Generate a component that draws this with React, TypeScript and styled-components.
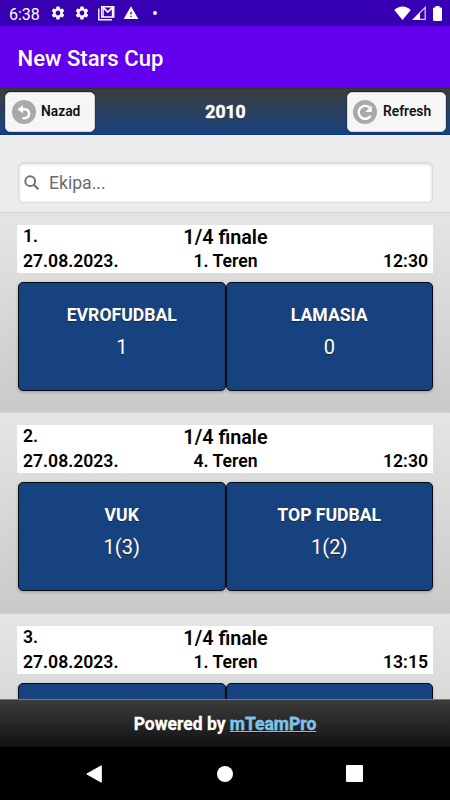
import React from "react";
import styled, { createGlobalStyle } from "styled-components";
import { MdSettings, MdWarning } from "react-icons/md";

const GlobalStyle = createGlobalStyle`
  * { box-sizing: border-box; }
  body { margin: 0; background: #000; font-family: Roboto, sans-serif; overflow: hidden; }
`;

const Screen = styled.div`
  width: 450px;
  height: 800px;
  display: flex;
  flex-direction: column;
  overflow: hidden;
  white-space: nowrap;
`;

const StatusBar = styled.div`
  flex: none;
  height: 26px;
  background: #3700b3;
  color: #fff;
  display: flex;
  align-items: center;
  justify-content: space-between;
  padding: 0 8px 0 9px;
`;

const StatusGroup = styled.div<{ $gap: number }>`
  display: flex;
  align-items: center;
  gap: ${(p) => p.$gap}px;
  svg { display: block; }
`;

const Clock = styled.span`
  font-size: 16px;
  line-height: 23px;
  width: 33px;
  padding-top: 3px;
`;

const Dot = styled.span`
  width: 4px;
  height: 4px;
  border-radius: 50%;
  background: #fff;
  margin-left: 6px;
`;

const AppBar = styled.header`
  flex: none;
  height: 62px;
  background: #6200ee;
  color: #fff;
  font-size: 22.1px;
  font-weight: 500;
  line-height: 64px;
  padding-left: 17.5px;
`;

const Toolbar = styled.div`
  flex: none;
  height: 47px;
  display: grid;
  grid-template-columns: 1fr auto 1fr;
  align-items: start;
  padding: 4px 4px 0 5px;
  background: linear-gradient(#3c3c3c, #174280);
  border-top: 1px solid #33342b;
  border-bottom: 1px solid #06348a;
`;

const ToolButton = styled.button<{ $width: number; $end?: boolean }>`
  width: ${(p) => p.$width}px;
  justify-self: ${(p) => (p.$end ? "end" : "start")};
  height: 40px;
  margin-top: -1px;
  display: flex;
  align-items: center;
  gap: ${(p) => (p.$end ? 6 : 5)}px;
  padding: 0 0 0 ${(p) => (p.$end ? 5 : 6)}px;
  border: 1px solid #d4d6da;
  border-radius: 5px;
  background: #f6f6f6;
  box-shadow: 0 -1px 1px rgba(0, 0, 0, 0.5), 0 1px 2px rgba(0, 0, 0, 0.2);
  color: #111;
  font: 600 13.8px Roboto, sans-serif;
  svg { flex: none; }
  span { margin-bottom: 2px; }
`;

const Heading = styled.h1`
  margin: 0;
  color: #fff;
  font-size: 17.6px;
  font-weight: 700;
  line-height: 39px;
  text-shadow: 0 1px 0 #111;
  -webkit-text-stroke: 0.5px #fff;
`;

const SearchArea = styled.div`
  flex: none;
  height: 77px;
  background: #ececec;
  padding: 27px 17px 0 18px;
  box-shadow: inset 0 1px 1px #f5f5f5;
`;

const SearchBox = styled.label`
  height: 41px;
  display: flex;
  align-items: center;
  padding-left: 5px;
  gap: 9px;
  border: 1px solid #d9d9d9;
  border-radius: 5px;
  background: #fff;
  box-shadow: inset 0 1px 3px rgba(0, 0, 0, 0.2);
`;

const SearchInput = styled.input`
  border: 0;
  outline: 0;
  background: transparent;
  padding: 0;
  width: 350px;
  font: 400 17.6px Roboto, sans-serif;
  &::placeholder { color: #6c6c6c; opacity: 1; }
`;

const MatchList = styled.main`
  flex: 1 1 0;
  min-height: 0;
  overflow: hidden;
  background: #c9c9c9;
`;

const MatchItem = styled.section`
  height: 200.4px;
  padding: 12px 17px 0;
  border-top: 1px solid #d3d3d3;
  background: linear-gradient(#e5e5e5, #c9c9c9);
`;

const MatchInfo = styled.div`
  height: 48px;
  display: grid;
  grid-template-columns: 1fr auto 1fr;
  grid-template-rows: 25px 22px;
  padding: 0 5px 0 6px;
  background: #fff;
  color: #000;
  font-size: 17.6px;
  font-weight: 600;
  line-height: 22px;
  text-align: center;
`;

const Start = styled.span`
  text-align: left;
`;

const End = styled.span`
  text-align: right;
`;

const Stage = styled.span`
  font-size: 19.8px;
  line-height: 25px;
`;

const Teams = styled.div`
  display: flex;
  margin-top: 9px;
  padding-left: 1px;
`;

const Team = styled.div`
  flex: 1 1 0;
  height: 109px;
  padding-top: 20px;
  border: 1px solid #080c14;
  border-radius: 5px;
  background: #174280;
  box-shadow: 0 1px 3px rgba(0, 0, 0, 0.25);
  color: #fff;
  text-align: center;
  text-shadow: 0 1px 0 #222;
`;

const TeamName = styled.div`
  font-size: 17.6px;
  font-weight: 700;
  line-height: 25px;
`;

const Score = styled.div`
  font-size: 20px;
  line-height: 26px;
  margin-top: 6px;
`;

const Footer = styled.footer`
  flex: none;
  height: 48px;
  border-top: 1px solid #777;
  background: linear-gradient(#3c3c3c, #111);
  color: #fff;
  text-align: center;
  font-size: 17.5px;
  font-weight: 700;
  line-height: 48px;
  text-shadow: 0 1px 0 #111;
  -webkit-text-stroke: 0.3px currentColor;
`;

const FooterLink = styled.a`
  color: #7cc4e7;
  text-decoration: underline;
`;

const NavBar = styled.nav`
  flex: none;
  height: 53px;
  background: #000;
  display: grid;
  grid-template-columns: 1fr 18px 1fr;
  align-items: center;
  justify-items: center;
  svg { display: block; }
`;

const NavSlot = styled.div<{ $side: "left" | "right" }>`
  justify-self: ${(p) => (p.$side === "left" ? "end" : "start")};
  margin: ${(p) => (p.$side === "left" ? "0 114px 0 0" : "0 0 0 112px")};
`;

const GmailIcon = () => (
  <svg width="17" height="15" viewBox="0 0 17 15" fill="none" stroke="#fff">
    <path d="M.8 2.5v11.2H14" strokeWidth="1.4" />
    <path d="M3.7.8h12.1v10.2H3.7z" strokeWidth="1.4" />
    <path d="M5.2 1.6 9.8 6l4.6-4.4" strokeWidth="1.7" />
    <path d="M5.2 1v10M14.4 1v10" strokeWidth="1.2" />
  </svg>
);

const WifiIcon = () => (
  <svg width="17" height="14" viewBox="0 0 17 14" fill="#fff">
    <path d="M8.5 14 .3 4C4.8-.7 12.2-.7 16.7 4z" />
  </svg>
);

const SignalIcon = () => (
  <svg width="14" height="14" viewBox="0 0 14 14">
    <path d="M1.4 13.3 13.2 1.4v11.9z" fill="none" stroke="#dcd8ff" strokeWidth="1.2" />
    <path d="M1 13.5 8 6.4v7.1z" fill="#fff" />
  </svg>
);

const BatteryIcon = () => (
  <svg width="9" height="15" viewBox="0 0 9 15" fill="#fff">
    <path d="M2.5 0h4v1.5h1.3q1.2 0 1.2 1.2v11q0 1.2-1.2 1.2H1.2Q0 14.9 0 13.7v-11q0-1.2 1.2-1.2h1.3z" />
  </svg>
);

const BackIcon = () => (
  <svg width="24" height="24" viewBox="0 0 24 24">
    <circle cx="12" cy="12" r="12" fill="#a9a9a9" />
    <path d="M11 5v8.6L5.4 9.3z" fill="#fff" />
    <path d="M9.5 9.3h3.2c5.8 0 6 8.2-.4 9h-1.8" fill="none" stroke="#fff" strokeWidth="2.5" />
  </svg>
);

const RefreshIcon = () => (
  <svg width="24" height="24" viewBox="0 0 24 24">
    <circle cx="12" cy="12" r="12" fill="#a9a9a9" />
    <path d="M16.6 7.6A6.5 6.5 0 1 0 17.6 15.9" fill="none" stroke="#fff" strokeWidth="2.4" />
    <path d="M18.8 5.4v6.5h-6.5z" fill="#fff" />
  </svg>
);

const SearchIcon = () => (
  <svg width="16" height="16" viewBox="0 0 16 16" fill="none" stroke="#737373">
    <circle cx="6.2" cy="6.2" r="4.9" strokeWidth="2" />
    <path d="m9.8 9.8 4.6 4.5" strokeWidth="2.2" />
  </svg>
);

interface Match {
  id: number;
  stage: string;
  date: string;
  field: string;
  time: string;
  teams: { name: string; score: string }[];
}

const matches: Match[] = [
  { id: 1, stage: "1/4 finale", date: "27.08.2023.", field: "1. Teren", time: "12:30", teams: [{ name: "EVROFUDBAL", score: "1" }, { name: "LAMASIA", score: "0" }] },
  { id: 2, stage: "1/4 finale", date: "27.08.2023.", field: "4. Teren", time: "12:30", teams: [{ name: "VUK", score: "1(3)" }, { name: "TOP FUDBAL", score: "1(2)" }] },
  { id: 3, stage: "1/4 finale", date: "27.08.2023.", field: "1. Teren", time: "13:15", teams: [{ name: "", score: "" }, { name: "", score: "" }] },
];

export default function App() {
  return (
    <>
      <GlobalStyle />
      <Screen>
        <StatusBar>
          <StatusGroup $gap={8}>
            <Clock>6:38</Clock>
            <MdSettings size={16} />
            <MdSettings size={16} />
            <GmailIcon />
            <MdWarning size={16} />
            <Dot />
          </StatusGroup>
          <StatusGroup $gap={7}>
            <StatusGroup $gap={1}>
              <WifiIcon />
              <SignalIcon />
            </StatusGroup>
            <BatteryIcon />
          </StatusGroup>
        </StatusBar>
        <AppBar>New Stars Cup</AppBar>
        <Toolbar>
          <ToolButton $width={90}><BackIcon /><span>Nazad</span></ToolButton>
          <Heading>2010</Heading>
          <ToolButton $width={99} $end><RefreshIcon /><span>Refresh</span></ToolButton>
        </Toolbar>
        <SearchArea>
          <SearchBox>
            <SearchIcon />
            <SearchInput placeholder="Ekipa..." />
          </SearchBox>
        </SearchArea>
        <MatchList>
          {matches.map((m) => (
            <MatchItem key={m.id}>
              <MatchInfo>
                <Start>{m.id}.</Start>
                <Stage>{m.stage}</Stage>
                <End />
                <Start>{m.date}</Start>
                <span>{m.field}</span>
                <End>{m.time}</End>
              </MatchInfo>
              <Teams>
                {m.teams.map((t, i) => (
                  <Team key={i}>
                    <TeamName>{t.name}</TeamName>
                    <Score>{t.score}</Score>
                  </Team>
                ))}
              </Teams>
            </MatchItem>
          ))}
        </MatchList>
        <Footer>Powered by <FooterLink>mTeamPro</FooterLink></Footer>
        <NavBar>
          <NavSlot $side="left">
            <svg width="16" height="18" viewBox="0 0 16 18"><path d="M15.3.8v16.4L.8 9z" fill="#fff" stroke="#fff" strokeLinejoin="round" /></svg>
          </NavSlot>
          <svg width="16" height="16" viewBox="0 0 16 16"><circle cx="8" cy="8" r="8" fill="#fff" /></svg>
          <NavSlot $side="right">
            <svg width="17" height="17" viewBox="0 0 17 17"><rect width="17" height="17" rx="1" fill="#fff" /></svg>
          </NavSlot>
        </NavBar>
      </Screen>
    </>
  );
}
